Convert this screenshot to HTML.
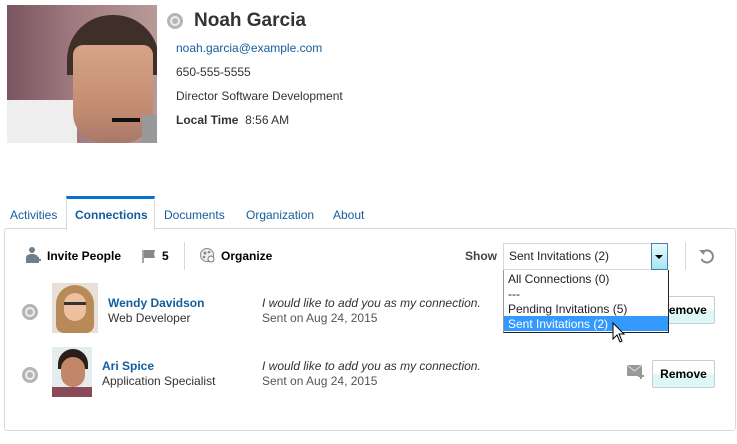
<!DOCTYPE html>
<html><head><meta charset="utf-8"><style>
*{margin:0;padding:0;box-sizing:border-box}
body{width:737px;height:444px;background:#fff;font-family:"Liberation Sans",Arial,sans-serif;font-size:12px;color:#333;position:relative;overflow:hidden}
.a{position:absolute;white-space:nowrap}
.blue{color:#145c9e}
.radio{position:absolute;width:16px;height:16px;border-radius:50%;background:#b5b5b5}
.radio:after{content:"";position:absolute;left:3px;top:3px;width:10px;height:10px;border-radius:50%;background:#b5b5b5;border:2px solid #eee;box-sizing:border-box}
.btn{position:absolute;border:1px solid #c4ced7;border-radius:2px;background:linear-gradient(#fff 0,#fff 45%,#dff6f7 55%,#dff6f7 100%);font-weight:bold;font-size:12px;color:#000;text-align:center}
</style></head><body>
<!-- profile photo -->
<div class="a" style="left:7px;top:5px;width:150px;height:138px;overflow:hidden;background:linear-gradient(90deg,#7a5560 0,#a07a80 45%,#b89a98 100%)">
  <div class="a" style="left:0;top:95px;width:70px;height:43px;background:#eeeeee"></div>
  <div class="a" style="left:60px;top:10px;width:92px;height:60px;border-radius:45px 45px 0 0;background:#3e3028"></div>
  <div class="a" style="left:66px;top:40px;width:80px;height:98px;border-radius:10px 10px 30px 30px;background:linear-gradient(#d7a487,#c08a70 70%,#a87868)"></div>
  <div class="a" style="left:135px;top:110px;width:15px;height:28px;background:#999"></div>
  <div class="a" style="left:105px;top:113px;width:28px;height:4px;background:#111"></div>
</div>
<div class="radio" style="left:167px;top:13px"></div>
<div class="a" style="left:194px;top:10px;font-size:19px;font-weight:bold;color:#333">Noah Garcia</div>
<div class="a blue" style="left:176px;top:41px">noah.garcia@example.com</div>
<div class="a" style="left:176px;top:65px">650-555-5555</div>
<div class="a" style="left:176px;top:89px">Director Software Development</div>
<div class="a" style="left:176px;top:113px"><b>Local Time</b>&nbsp; 8:56 AM</div>

<!-- tabs -->
<div class="a" style="left:4px;top:228px;width:732px;height:203px;border:1px solid #d6dadd;border-radius:3px"></div>
<div class="a" style="left:66px;top:196px;width:89px;height:34px;background:#fff;border-left:1px solid #d6dadd;border-right:1px solid #d6dadd;border-top:3px solid #0572ce"></div>
<div class="a blue" style="left:10px;top:208px">Activities</div>
<div class="a blue" style="left:75px;top:208px;font-weight:bold">Connections</div>
<div class="a blue" style="left:164px;top:208px">Documents</div>
<div class="a blue" style="left:246px;top:208px">Organization</div>
<div class="a blue" style="left:333px;top:208px">About</div>

<!-- toolbar -->
<svg class="a" style="left:25px;top:246px" width="18" height="18" viewBox="0 0 18 18"><circle cx="7" cy="4" r="3" fill="#6d7f8a"/><path d="M1 17v-5c0-3 3-4 6-4s6 1 6 4v5z" fill="#6d7f8a"/><path d="M13 11v6M10 14h6" stroke="#6d7f8a" stroke-width="2"/></svg>
<div class="a" style="left:47px;top:249px;font-weight:bold;color:#000">Invite People</div>
<svg class="a" style="left:141px;top:248px" width="16" height="16" viewBox="0 0 16 16"><path d="M2 2v13" stroke="#888" stroke-width="1.5"/><path d="M3 2h11l-1 4 1 4H3z" fill="#888"/></svg>
<div class="a" style="left:162px;top:249px;font-weight:bold;color:#000">5</div>
<div class="a" style="left:184px;top:242px;width:1px;height:28px;background:#d6dadd"></div>
<svg class="a" style="left:199px;top:247px" width="18" height="18" viewBox="0 0 18 18"><circle cx="8" cy="8" r="6.5" fill="#eee" stroke="#888"/><circle cx="6" cy="6" r="1.5" fill="#888"/><circle cx="10" cy="5" r="1.3" fill="#888"/><circle cx="5" cy="10" r="1.3" fill="#888"/><circle cx="12" cy="12" r="3" fill="#fff" stroke="#777"/></svg>
<div class="a" style="left:221px;top:249px;font-weight:bold;color:#000">Organize</div>
<div class="a" style="left:465px;top:249px;font-weight:bold;color:#444">Show</div>
<div class="a" style="left:503px;top:243px;width:165px;height:27px;border:1px solid #d6dadd;background:#fff"></div>
<div class="a" style="left:509px;top:249px;color:#222">Sent Invitations (2)</div>
<div class="a" style="left:651px;top:243px;width:17px;height:27px;border:1px solid #4c7ab5;background:linear-gradient(#e8fafc,#a6e4f2)"></div>
<div class="a" style="left:655px;top:255px;width:0;height:0;border-left:4px solid transparent;border-right:4px solid transparent;border-top:4px solid #000"></div>
<div class="a" style="left:685px;top:242px;width:1px;height:28px;background:#d6dadd"></div>
<svg class="a" style="left:698px;top:248px" width="17" height="17" viewBox="0 0 17 17"><path d="M4 5A6 6 0 1 1 3.5 11" fill="none" stroke="#888" stroke-width="2"/><path d="M1 2l6 0-1 5z" fill="#888"/></svg>

<!-- rows -->
<div class="a" style="left:52px;top:283px;width:46px;height:50px;overflow:hidden;background:#e8e0d8">
  <div class="a" style="left:4px;top:2px;width:38px;height:48px;border-radius:19px 19px 8px 8px;background:#b88a58"></div>
  <div class="a" style="left:12px;top:10px;width:22px;height:28px;border-radius:11px;background:#eec0a0"></div>
  <div class="a" style="left:12px;top:19px;width:22px;height:3px;background:#333"></div>
</div>
<div class="a" style="left:52px;top:347px;width:40px;height:50px;overflow:hidden;background:#e4ecee">
  <div class="a" style="left:6px;top:2px;width:30px;height:20px;border-radius:15px 15px 0 0;background:#2a1d1a"></div>
  <div class="a" style="left:9px;top:10px;width:24px;height:30px;border-radius:12px;background:#c08868"></div>
  <div class="a" style="left:0;top:40px;width:40px;height:10px;background:#8a4a5a"></div>
</div>
<div class="radio" style="left:22px;top:304px"></div>
<div class="radio" style="left:22px;top:367px"></div>
<div class="a blue" style="left:108px;top:296px;font-weight:bold">Wendy Davidson</div>
<div class="a" style="left:108px;top:311px">Web Developer</div>
<div class="a blue" style="left:102px;top:359px;font-weight:bold">Ari Spice</div>
<div class="a" style="left:102px;top:374px">Application Specialist</div>
<div class="a" style="left:262px;top:296px;font-style:italic">I would like to add you as my connection.</div>
<div class="a" style="left:262px;top:311px;color:#555">Sent on Aug 24, 2015</div>
<div class="a" style="left:262px;top:359px;font-style:italic">I would like to add you as my connection.</div>
<div class="a" style="left:262px;top:374px;color:#555">Sent on Aug 24, 2015</div>
<div class="btn" style="left:652px;top:296px;width:63px;height:28px;line-height:26px">Remove</div>
<div class="btn" style="left:652px;top:360px;width:63px;height:28px;line-height:26px">Remove</div>
<svg class="a" style="left:627px;top:364px" width="18" height="16" viewBox="0 0 18 16"><rect x="0" y="1" width="15" height="11" fill="#999"/><path d="M0 1l7.5 6 7.5-6" fill="none" stroke="#ddd"/><path d="M14 9v6M11 12h6" stroke="#999" stroke-width="2"/></svg>

<!-- dropdown -->
<div class="a" style="left:503px;top:270px;width:166px;height:63px;background:#fff;border:1px solid #222;border-left-color:#999;border-top:none"></div>
<div class="a" style="left:508px;top:272px;color:#222">All Connections (0)</div>
<div class="a" style="left:508px;top:287px;color:#222">---</div>
<div class="a" style="left:508px;top:302px;color:#222">Pending Invitations (5)</div>
<div class="a" style="left:504px;top:316px;width:164px;height:15px;background:#3399ff"></div>
<div class="a" style="left:508px;top:317px;color:#fff">Sent Invitations (2)</div>
<svg class="a" style="left:612px;top:322px" width="14" height="22" viewBox="0 0 14 22"><path d="M1 1v16l4-4 3 7 2-1-3-7h5z" fill="#fff" stroke="#000"/></svg>
</body></html>
